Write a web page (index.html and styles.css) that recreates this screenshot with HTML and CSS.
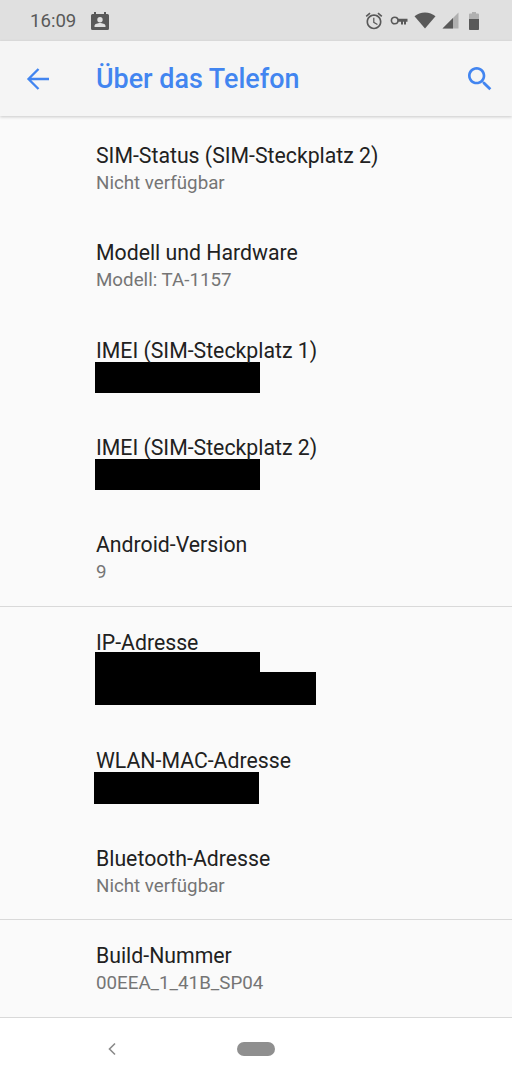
FILE: index.html
```html
<!DOCTYPE html>
<html lang="de">
<head>
    <meta charset="UTF-8">
    <title>Über das Telefon</title>
    <link rel="stylesheet" href="styles.css">
</head>
<body>
<div class="status-bar">
    <span class="time">16:09</span>
    <svg class="icon-contact" width="20" height="20" viewBox="0 0 20 20">
        <path fill="#595959" d="M4 1h2v2h8V1h2v2h1.500A1.500 1.500 0 0 1 19 4.500v13a1.500 1.500 0 0 1-1.500 1.500h-15A1.500 1.500 0 0 1 1 17.500v-13A1.500 1.500 0 0 1 2.500 3H4z"/>
        <circle cx="10" cy="8.800" r="2.700" fill="#e0e0e0"/>
        <path fill="#e0e0e0" d="M4.500 16v-1.200c0-1.900 3.600-2.800 5.500-2.800s5.500.9 5.500 2.800V16z"/>
    </svg>
    <div class="status-right">
        <svg width="20" height="20" viewBox="0 0 24 24">
            <path fill="#595959" d="M22 5.720l-4.600-3.860-1.290 1.530 4.600 3.860L22 5.720zM7.880 3.390 6.600 1.860 2 5.710l1.290 1.530 4.590-3.850zM12.500 8H11v6l4.750 2.850.75-1.230-4-2.370V8zM12 4c-4.970 0-9 4.030-9 9s4.030 9 9 9 9-4.030 9-9-4.030-9-9-9zm0 16c-3.870 0-7-3.130-7-7s3.130-7 7-7 7 3.130 7 7-3.130 7-7 7z"/>
        </svg>
        <svg class="icon-key" width="18" height="12" viewBox="0 0 18 12">
            <circle cx="4.700" cy="5.500" r="3.300" fill="none" stroke="#595959" stroke-width="1.600"/>
            <path fill="#595959" d="M8 3.800h9.500v3h-1.500v2.700h-2V6.800h-1v2.700h-2V6.800H8z"/>
        </svg>
        <svg class="icon-wifi" width="22" height="17" viewBox="0 0 22 17">
            <path fill="#595959" d="M11 16.500.5 4.300C3.300 1.900 7 .5 11 .5s7.700 1.400 10.500 3.800z"/>
        </svg>
        <svg class="icon-signal" width="17" height="17" viewBox="0 0 17 17">
            <path fill="#b0b0b0" d="M16.500.5v16H.5z"/>
            <path fill="#595959" d="M11 6v10.500H.5z"/>
        </svg>
        <svg class="icon-battery" width="10" height="18" viewBox="0 0 10 18">
            <path fill="#b0b0b0" d="M3 0h4v1.500h2a1 1 0 0 1 1 1V17a1 1 0 0 1-1 1H1a1 1 0 0 1-1-1V2.500a1 1 0 0 1 1-1h2z"/>
            <path fill="#595959" d="M0 7h10v10a1 1 0 0 1-1 1H1a1 1 0 0 1-1-1z"/>
        </svg>
    </div>
</div>

<div class="app-bar">
    <svg class="back" width="24" height="24" viewBox="0 0 24 24">
        <path fill="none" stroke="#4285f0" stroke-width="2.300" d="M23 12H3M12.500 2 2.500 12l10 10"/>
    </svg>
    <span class="app-title">Über das Telefon</span>
    <svg class="search" width="32" height="32" viewBox="0 0 24 24">
        <path fill="#4285f0" d="M15.500 14h-.79l-.28-.27C15.410 12.590 16 11.110 16 9.500 16 5.910 13.090 3 9.500 3S3 5.910 3 9.500 5.910 16 9.500 16c1.610 0 3.090-.59 4.230-1.570l.27.28v.79l5 4.990L20.490 19l-4.990-5zm-6 0C7.010 14 5 11.990 5 9.500S7.010 5 9.500 5 14 7.010 14 9.500 11.990 14 9.500 14z"/>
    </svg>
</div>

<div class="list">
    <div class="group group-first">
        <div class="row">
            <div class="title">SIM-Status (SIM-Steckplatz 2)</div>
            <div class="sub">Nicht verfügbar</div>
        </div>
        <div class="row">
            <div class="title">Modell und Hardware</div>
            <div class="sub">Modell: TA-1157</div>
        </div>
        <div class="row">
            <div class="title">IMEI (SIM-Steckplatz 1)</div>
            <div class="redact redact-imei"></div>
        </div>
        <div class="row">
            <div class="title">IMEI (SIM-Steckplatz 2)</div>
            <div class="redact redact-imei"></div>
        </div>
        <div class="row">
            <div class="title">Android-Version</div>
            <div class="sub">9</div>
        </div>
    </div>
    <div class="group group-middle">
        <div class="row row-ip">
            <div class="title">IP-Adresse</div>
            <div class="redact redact-ip-top"></div>
            <div class="redact redact-ip-bottom"></div>
        </div>
        <div class="row row-mac">
            <div class="title">WLAN-MAC-Adresse</div>
            <div class="redact redact-mac"></div>
        </div>
        <div class="row row-bt">
            <div class="title">Bluetooth-Adresse</div>
            <div class="sub">Nicht verfügbar</div>
        </div>
    </div>
    <div class="group group-last">
        <div class="row">
            <div class="title">Build-Nummer</div>
            <div class="sub">00EEA_1_41B_SP04</div>
        </div>
    </div>
</div>

<div class="nav-bar">
    <svg class="nav-back" width="10" height="14" viewBox="0 0 10 14">
        <path fill="none" stroke="#8a8a8a" stroke-width="1.600" d="M8 1.500 2.500 7 8 12.500"/>
    </svg>
    <div class="nav-home"></div>
</div>
</body>
</html>
```

FILE: styles.css
```css
* {
    box-sizing: border-box;
    margin: 0;
    padding: 0;
    font-family: Roboto, "Noto Sans", sans-serif;
}

body {
    width: 512px;
    height: 1080px;
    overflow: hidden;
    background-color: #fafafa;
}

.status-bar {
    height: 41px;
    background-color: #e0e0e0;
    display: flex;
    align-items: center;
    padding-left: 30px;
    padding-right: 33px;
}

.time {
    font-size: 18.6px;
    color: #595959;
    width: 60px;
}

.status-right {
    margin-left: auto;
    display: flex;
    align-items: center;
}

.icon-key {
    margin-left: 6px;
}

.icon-wifi {
    margin-left: 6px;
}

.icon-signal {
    margin-left: 5.5px;
}

.icon-battery {
    margin-left: 10.5px;
}

.app-bar {
    height: 75px;
    background-color: #f5f5f5;
    box-shadow: 0 1px 3px rgba(0, 0, 0, 0.2);
    display: flex;
    align-items: center;
    padding-left: 26px;
    padding-right: 16px;
    position: relative;
}

.app-title {
    font-size: 26.9px;
    font-weight: 500;
    color: #4285f0;
    margin-left: 46px;
}

.search {
    margin-left: auto;
}

.list {
    padding-top: 4px;
}

.group-first,
.group-middle {
    border-bottom: 1px solid #d9d9d9;
}

.group-first .row:last-child {
    min-height: 96.67px;
}

.row {
    min-height: 97.33px;
    padding: 22px 0 0 96px;
}

.row-ip {
    min-height: 118px;
}

.row-mac {
    min-height: 98px;
}

.row-bt {
    min-height: 96px;
}

.group-last {
    height: 97px;
}

.title {
    font-size: 21.25px;
    line-height: 27px;
    color: #212121;
}

.sub {
    font-size: 18.75px;
    line-height: 28px;
    color: #757575;
}

.redact {
    background-color: #000;
    margin-left: -1px;
}

.redact-imei {
    width: 165px;
    height: 31px;
    margin-top: -2px;
}

.redact-ip-top {
    width: 165px;
    height: 20px;
    margin-top: -4px;
}

.redact-ip-bottom {
    width: 221px;
    height: 33px;
}

.redact-mac {
    width: 165px;
    height: 32px;
    margin-top: -2px;
    margin-left: -2px;
}

.nav-bar {
    height: 63px;
    background-color: #fff;
    border-top: 1px solid #d9d9d9;
    display: flex;
    align-items: center;
    padding-left: 107px;
}

.nav-home {
    width: 38px;
    height: 14px;
    border-radius: 7px;
    background-color: #8f8f8f;
    margin-left: 120px;
}
```
